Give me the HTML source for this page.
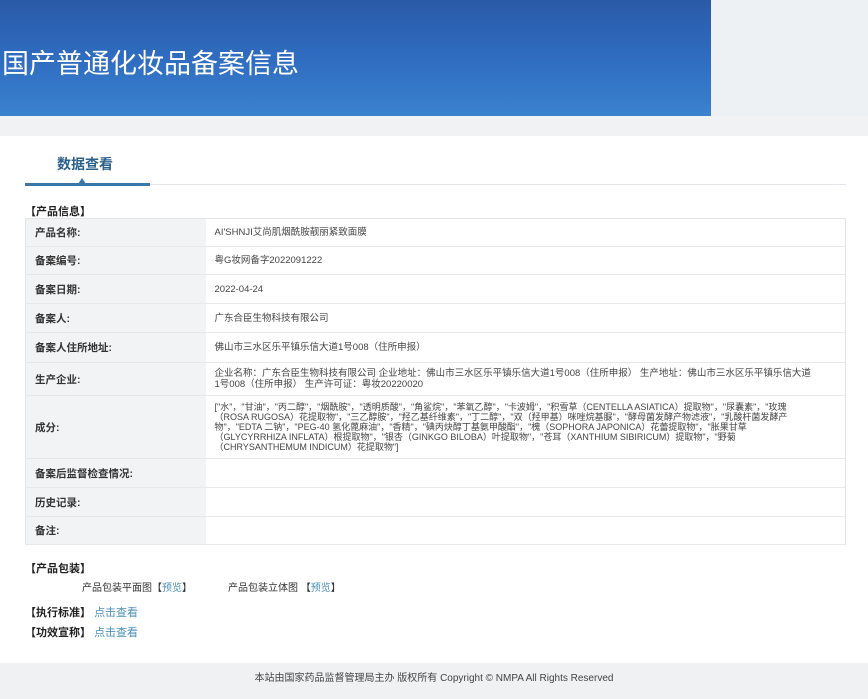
<!DOCTYPE html>
<html><head><meta charset="utf-8"><style>
*{margin:0;padding:0;box-sizing:border-box}
body{width:868px;height:699px;overflow:hidden;background:#fff;font-family:"Liberation Sans","Noto Sans CJK SC",sans-serif;color:#333;position:relative}
.banner{position:absolute;left:0;top:0;width:711px;height:116px;background:linear-gradient(180deg,#2a5aa8 0%,#2f6cc0 50%,#3a82cf 100%)}
.bright{position:absolute;left:711px;top:0;width:157px;height:116px;background:#eef1f3}
.band{position:absolute;left:0;top:116px;width:868px;height:20px;background:#f0f2f3}
.title{position:absolute;left:2px;top:42px;font-size:27px;color:#fff;font-family:"Noto Sans CJK SC",sans-serif}
.tab{position:absolute;left:57px;top:154px;font-size:14px;font-weight:bold;color:#2b5f8c}
.tabline{position:absolute;left:25px;top:184px;width:821px;height:1px;background:#e2e6ea}
.tabact{position:absolute;left:25px;top:183px;width:125px;height:3px;background:#3b78a8}
.tri{position:absolute;left:78px;top:178px;width:0;height:0;border-left:4px solid transparent;border-right:4px solid transparent;border-bottom:6px solid #3b78a8}
.sec{position:absolute;left:25px;font-size:11px;font-weight:bold;color:#222}
table{position:absolute;left:25px;top:218px;width:821px;border-collapse:collapse;font-size:10px;border:1px solid #e2e4e6}
td{border-bottom:1px solid #e6e8ea;vertical-align:middle}
td.l{width:180px;background:#f2f3f4;padding-left:9px;font-weight:bold;color:#333;font-size:10.5px}
td.v{padding-left:9px;padding-right:30px;color:#444;line-height:11px;font-size:9.5px}
.small{position:absolute;font-size:10px;color:#333}
a{color:#4a8fb8;text-decoration:none}
.foot{position:absolute;left:0;top:663px;width:868px;height:36px;background:#eff1f2;font-size:10px;color:#444;text-align:center;padding-top:6px}
</style></head><body>
<div class="banner"></div><div class="bright"></div><div class="band"></div>
<div class="title">国产普通化妆品备案信息</div>
<div class="tab">数据查看</div>
<div class="tabline"></div><div class="tabact"></div><div class="tri"></div>
<div class="sec" style="top:203px">【产品信息】</div>
<table>
<tr style="height:28px"><td class="l">产品名称:</td><td class="v">AI'SHNJI艾尚肌烟酰胺靓丽紧致面膜</td></tr>
<tr style="height:28px"><td class="l">备案编号:</td><td class="v">粤G妆网备字2022091222</td></tr>
<tr style="height:29px"><td class="l">备案日期:</td><td class="v">2022-04-24</td></tr>
<tr style="height:29px"><td class="l">备案人:</td><td class="v">广东合臣生物科技有限公司</td></tr>
<tr style="height:30px"><td class="l">备案人住所地址:</td><td class="v">佛山市三水区乐平镇乐信大道1号008（住所申报）</td></tr>
<tr style="height:33px"><td class="l">生产企业:</td><td class="v">企业名称：广东合臣生物科技有限公司 企业地址：佛山市三水区乐平镇乐信大道1号008（住所申报） 生产地址：佛山市三水区乐平镇乐信大道1号008（住所申报） 生产许可证：粤妆20220020</td></tr>
<tr style="height:63px"><td class="l">成分:</td><td class="v" style="font-size:9px;line-height:10px;padding-right:40px">["水"，"甘油"，"丙二醇"，"烟酰胺"，"透明质酸"，"角鲨烷"，"苯氧乙醇"，"卡波姆"，"积雪草（CENTELLA ASIATICA）提取物"，"尿囊素"，"玫瑰（ROSA RUGOSA）花提取物"，"三乙醇胺"，"羟乙基纤维素"，"丁二醇"，"双（羟甲基）咪唑烷基脲"，"酵母菌发酵产物滤液"，"乳酸杆菌发酵产物"，"EDTA 二钠"，"PEG-40 氢化蓖麻油"，"香精"，"碘丙炔醇丁基氨甲酸酯"，"槐（SOPHORA JAPONICA）花蕾提取物"，"胀果甘草（GLYCYRRHIZA INFLATA）根提取物"，"银杏（GINKGO BILOBA）叶提取物"，"苍耳（XANTHIUM SIBIRICUM）提取物"，"野菊（CHRYSANTHEMUM INDICUM）花提取物"]</td></tr>
<tr style="height:29px"><td class="l">备案后监督检查情况:</td><td class="v"></td></tr>
<tr style="height:29px"><td class="l">历史记录:</td><td class="v"></td></tr>
<tr style="height:28px"><td class="l">备注:</td><td class="v"></td></tr>
</table>
<div class="sec" style="top:560px">【产品包装】</div>
<div class="small" style="left:82px;top:579px">产品包装平面图【<a>预览</a>】</div>
<div class="small" style="left:228px;top:579px">产品包装立体图 【<a>预览</a>】</div>
<div class="sec" style="top:604px">【执行标准】 <a style="font-weight:normal">点击查看</a></div>
<div class="sec" style="top:624px">【功效宣称】 <a style="font-weight:normal">点击查看</a></div>
<div class="foot">本站由国家药品监督管理局主办 版权所有 Copyright © NMPA All Rights Reserved</div>
</body></html>
